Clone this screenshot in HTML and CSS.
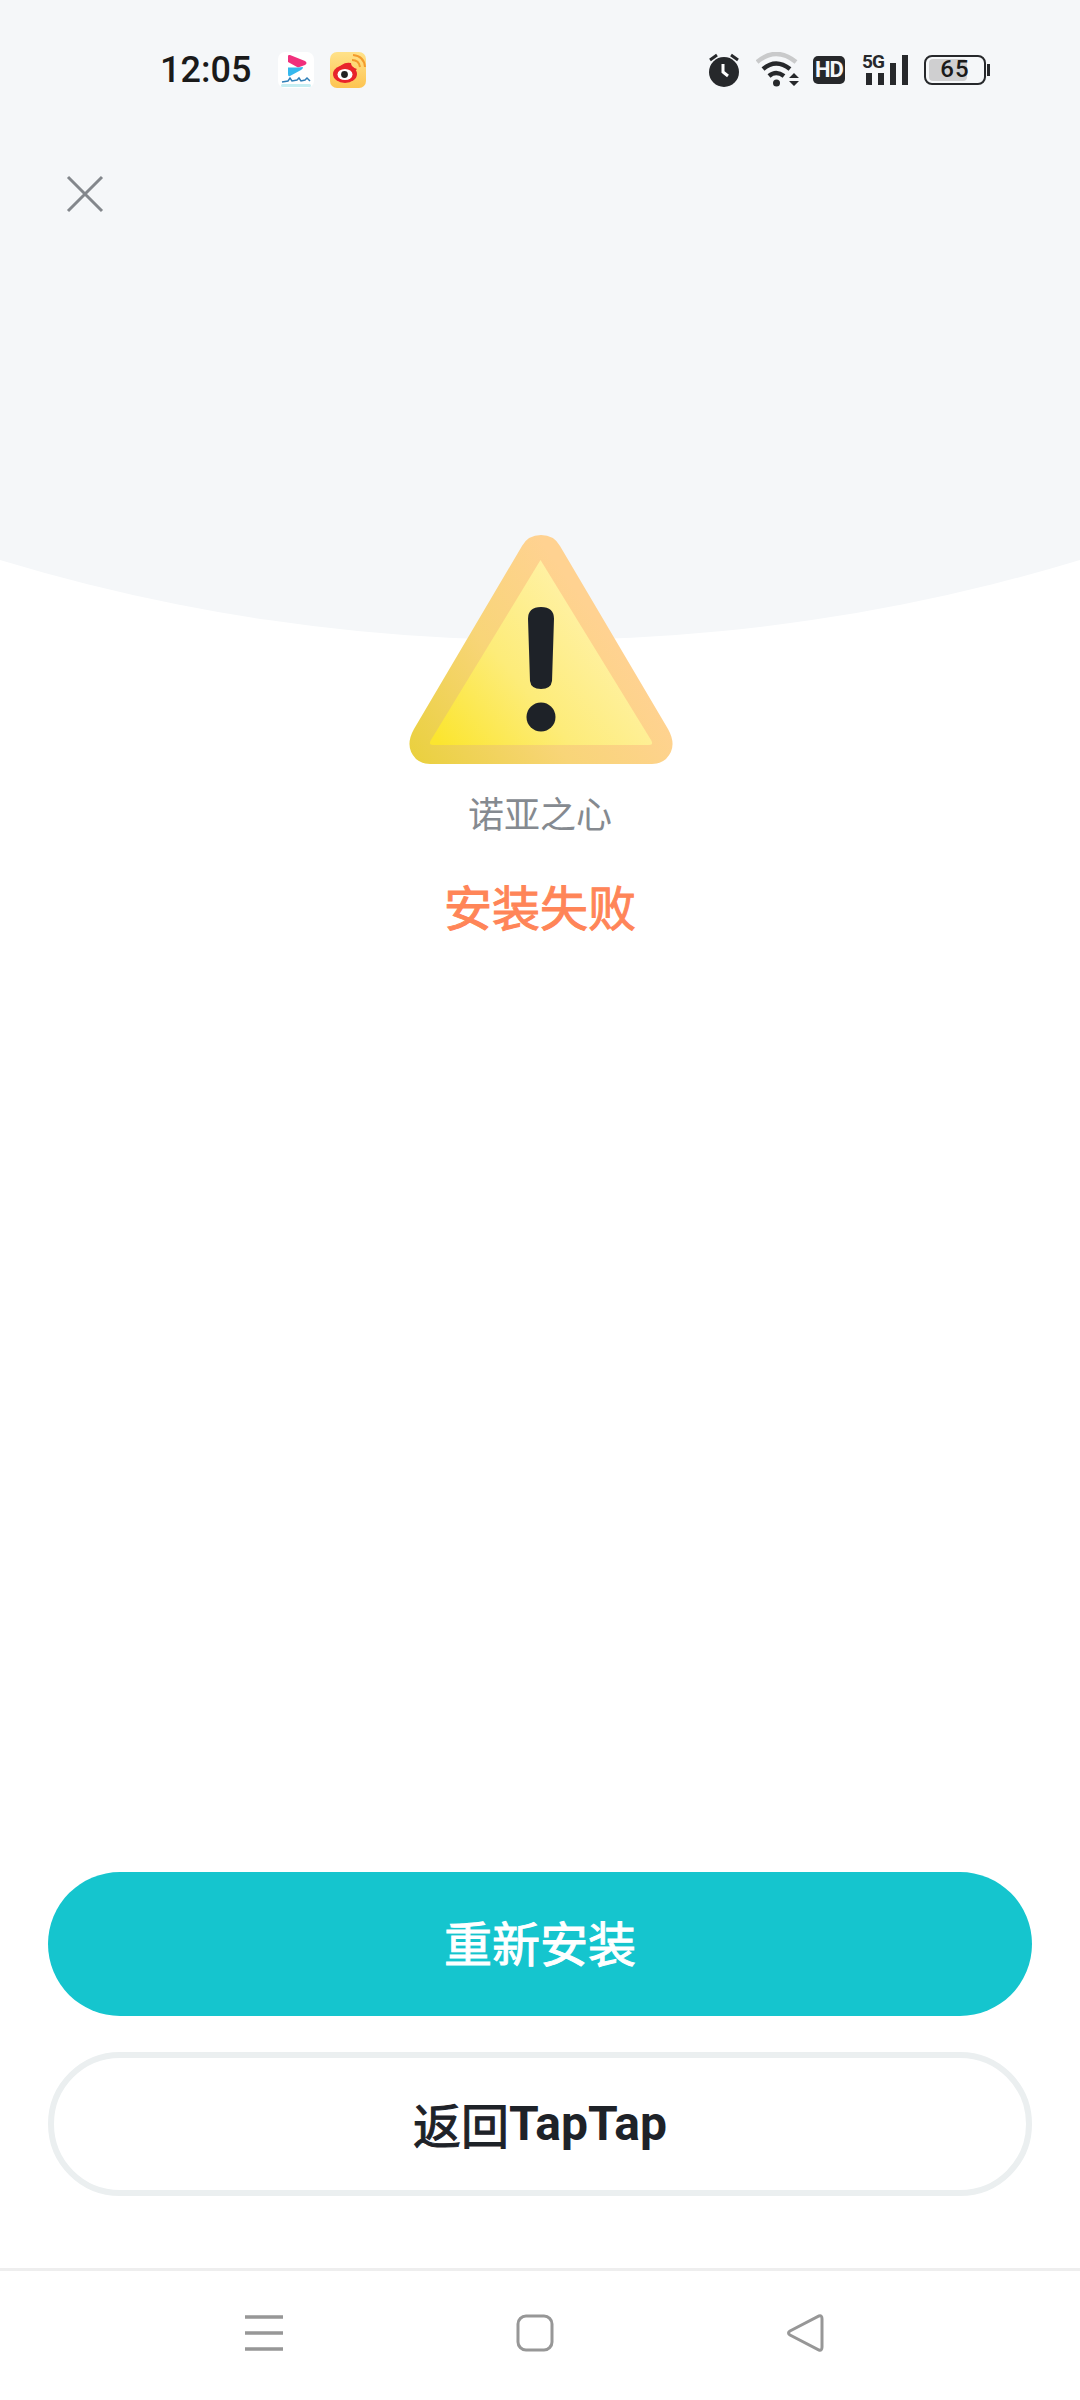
FILE: index.html
```html
<html>

<head>
	<meta charset="utf-8">
	<title>安装失败</title>
	<link rel="stylesheet" href="styles.css">
</head>

<body>
	<main id="page">
		<div id="header">
			<div id="statusbar">
				<span id="clock">12:05</span>
				<svg class="appicon" width="36" height="36" viewBox="0 0 36 36">
					<rect width="36" height="36" rx="7" fill="#fff" />
					<path d="M10 4 Q10 2.500 12 3 L27 9 Q30 11 27 13 L20 15.500 L10 10 Z" fill="#f0307c" />
					<path d="M10 15.500 L20 15.500 L25 15 Q25 17 23 18 L12 24 Q10 25 10 22 Z" fill="#35b8ee" />
					<path d="M4 30 L10 29 L12 26 L14 29 L19 28 L21 26 L23 29 L27 28 L29 26 L32 29" stroke="#2f7fb8" stroke-width="1.500" fill="none" />
					<rect x="3" y="32" width="30" height="3" rx="1.500" fill="#c5eef2" />
				</svg>
				<svg class="appicon" width="36" height="36" viewBox="0 0 36 36">
					<defs>
						<linearGradient id="wb" x1="0" y1="0" x2="0" y2="1">
							<stop offset="0" stop-color="#ffe28a" />
							<stop offset="1" stop-color="#fdc452" />
						</linearGradient>
					</defs>
					<rect width="36" height="36" rx="7" fill="url(#wb)" />
					<ellipse cx="15" cy="22" rx="12" ry="9" fill="#e8232b" />
					<path d="M6 20 Q12 9 21 11 Q21 15 27 17 L20 24 Z" fill="#e8232b" />
					<ellipse cx="15" cy="22.500" rx="7.500" ry="5.500" fill="#fff" />
					<circle cx="14.500" cy="22.500" r="3.400" fill="#222" />
					<path d="M22 8 Q29 8 30 15 M23 3 Q34 4 35 15" stroke="#f39a2c" stroke-width="2" fill="none" />
				</svg>
				<div id="statusicons">
					<svg width="32" height="36" viewBox="0 0 32 36">
						<circle cx="16" cy="20" r="15" fill="#26282b" />
						<path d="M15 12 V20 L20 24" stroke="#fff" stroke-width="3" fill="none" />
						<path d="M2 8 L9 3 M30 8 L23 3" stroke="#26282b" stroke-width="3" />
					</svg>
					<svg id="wifi" width="44" height="36" viewBox="0 0 44 36">
						<path d="M1 10 Q20 -6 40 10" stroke="#c9cacb" stroke-width="4.500" fill="none" />
						<path d="M7 17 Q20 6 34 17" stroke="#26282b" stroke-width="4.500" fill="none" />
						<path d="M13 24 Q20 18 28 24" stroke="#26282b" stroke-width="4.500" fill="none" />
						<circle cx="20.500" cy="31" r="3.500" fill="#26282b" />
						<path d="M38 21 L43 26 H33 Z M33 29 H43 L38 34 Z" fill="#26282b" />
					</svg>
					<span id="hd">HD</span>
					<div id="signal">
						<span id="fiveg">5G</span>
						<svg width="46" height="30" viewBox="0 0 46 30">
							<rect x="4" y="18" width="6" height="12" fill="#26282b" />
							<rect x="16" y="18" width="6" height="12" fill="#26282b" />
							<rect x="28" y="8" width="6" height="22" fill="#26282b" />
							<rect x="40" y="0" width="6" height="30" fill="#26282b" />
						</svg>
					</div>
					<div id="battery">
						<div id="batterybox">
							<div id="batterylevel"></div>
							<span id="batterynum">65</span>
						</div>
						<div id="batterycap"></div>
					</div>
				</div>
			</div>
			<svg id="close" width="38" height="38" viewBox="0 0 38 38">
				<path d="M2 2 L36 36 M36 2 L2 36" stroke="#83878c" stroke-width="3" fill="none" />
			</svg>
		</div>

		<div id="result">
			<svg id="warning" width="266" height="230" viewBox="0 0 266 230">
				<defs>
					<linearGradient id="outer" x1="0" y1="1" x2="0.800" y2="0.500">
						<stop offset="0" stop-color="#e9d03c" />
						<stop offset="0.550" stop-color="#f8d578" />
						<stop offset="1" stop-color="#ffd291" />
					</linearGradient>
					<linearGradient id="inner" x1="0.050" y1="1" x2="0.850" y2="0.450">
						<stop offset="0" stop-color="#fbe52f" />
						<stop offset="0.500" stop-color="#fdec79" />
						<stop offset="1" stop-color="#fff1a5" />
					</linearGradient>
				</defs>
				<path d="M133 0 Q146 0 152 11 L260 194 Q270 212 258 224 Q252 229 244 229 H22 Q14 229 8 224 Q-4 212 6 194 L114 11 Q120 0 133 0 Z" fill="url(#outer)" />
				<path d="M132.500 25 L243 205 Q246 210 241 210 H25 Q20 210 23 205 Z" fill="url(#inner)" />
				<path d="M120 84 Q120 72 133 72 Q146 72 146 84 L144 146 Q143 154 133 154 Q123 154 122 146 Z" fill="#1e2228" />
				<circle cx="133" cy="182" r="14.500" fill="#1e2228" />
			</svg>
			<div id="appname">诺亚之心</div>
			<div id="failtext">安装失败</div>
		</div>

		<div id="buttons">
			<div class="btn" id="retry"><span class="medium">重新安装</span></div>
			<div class="btn" id="back"><span class="medium">返回</span>TapTap</div>
		</div>

		<div id="navbar">
			<svg width="40" height="38" viewBox="0 0 40 38">
				<path d="M1 3 H39 M1 19 H39 M1 35 H39" stroke="#979797" stroke-width="3.500" />
			</svg>
			<svg width="38" height="38" viewBox="0 0 38 38">
				<rect x="2" y="2" width="34" height="34" rx="8" stroke="#979797" stroke-width="3" fill="none" />
			</svg>
			<svg width="38" height="38" viewBox="0 0 38 38">
				<path d="M33 2 Q36 1 36 5 V33 Q36 37 33 36 L4 21 Q1 19 4 17 Z" stroke="#979797" stroke-width="3" fill="none" />
			</svg>
		</div>
	</main>
</body>

</html>
```

FILE: styles.css
```css
html,
body {
	margin: 0;
	background-color: #ffffff;
}

#page {
	width: 1080px;
	height: 2400px;
	display: flex;
	flex-direction: column;
	font-family: "Roboto", "Noto Sans CJK SC", sans-serif;
	position: relative;
	overflow: hidden;
}

/* grey area with the curved bottom */
#header {
	height: 640px;
	background-color: #f5f7f9;
	clip-path: circle(1862px at 50% -1222px);
	box-sizing: border-box;
	padding-top: 48px;
}

#statusbar {
	height: 44px;
	display: flex;
	align-items: center;
	padding: 0 90px 0 160px;
}

#clock {
	font-size: 36px;
	font-weight: 500;
	color: #1a1a1a;
	width: 118px;
}

.appicon {
	margin-right: 16px;
}

#statusicons {
	margin-left: auto;
	display: flex;
	align-items: center;
	gap: 13px;
}

#wifi {
	margin-left: 3px;
}

#hd {
	background-color: #26282b;
	color: #f5f7f9;
	font-size: 22px;
	font-weight: 700;
	width: 32px;
	height: 28px;
	line-height: 28px;
	text-align: center;
	border-radius: 5px;
	letter-spacing: -1px;
}

#signal {
	position: relative;
	width: 46px;
	height: 30px;
	margin-left: 4px;
}

#fiveg {
	position: absolute;
	left: 0;
	top: -2px;
	font-size: 19px;
	font-weight: 700;
	color: #26282b;
	letter-spacing: -1px;
	line-height: 18px;
}

#battery {
	display: flex;
	align-items: center;
	gap: 1px;
	margin-left: 3px;
}

#batterybox {
	position: relative;
	box-sizing: border-box;
	width: 62px;
	height: 30px;
	border: 2.5px solid #26282b;
	border-radius: 8px;
}

#batterylevel {
	height: 22px;
	width: 38px;
	margin: 1.5px 0 0 2.5px;
	background-color: #cfcfd0;
	border-radius: 4px;
}

#batterynum {
	position: absolute;
	left: 0;
	right: 0;
	top: -2px;
	text-align: center;
	font-size: 24px;
	font-weight: 500;
	line-height: 28px;
	letter-spacing: 1px;
	color: #1a1a1a;
}

#batterycap {
	width: 3px;
	height: 12px;
	background-color: #26282b;
}

#close {
	display: block;
	margin: 83px 0 0 66px;
}

#result {
	margin-top: -105px;
	display: flex;
	flex-direction: column;
	align-items: center;
	position: relative;
}

#warning {
	display: block;
	margin-left: 1px;
}

#appname {
	margin-top: 29px;
	font-size: 36px;
	line-height: 44px;
	color: #858a90;
}

#failtext {
	margin-top: 41px;
	font-size: 48px;
	line-height: 62px;
	font-weight: 400;
	-webkit-text-stroke: 1px #ff8558;
	color: #ff8558;
}

#buttons {
	margin-top: auto;
	padding: 0 48px;
	display: flex;
	flex-direction: column;
	gap: 36px;
}

.btn {
	height: 144px;
	box-sizing: border-box;
	padding-bottom: 6px;
	border-radius: 72px;
	display: flex;
	align-items: center;
	justify-content: center;
	font-size: 48px;
	font-weight: 700;
}

/* no medium cut of the CJK font, so thicken the regular one */
.medium {
	font-weight: 400;
	-webkit-text-stroke: 1px currentColor;
}

#retry {
	background-color: #15c5ce;
	color: #ffffff;
}

#back {
	border: 6px solid #ebeff0;
	padding-bottom: 2px;
	color: #1e2228;
}

#navbar {
	margin-top: 72px;
	height: 132px;
	box-sizing: border-box;
	border-top: 3px solid #eeeeee;
	display: flex;
	align-items: center;
	gap: 232px;
	padding: 0 0 5px 244px;
}
```
